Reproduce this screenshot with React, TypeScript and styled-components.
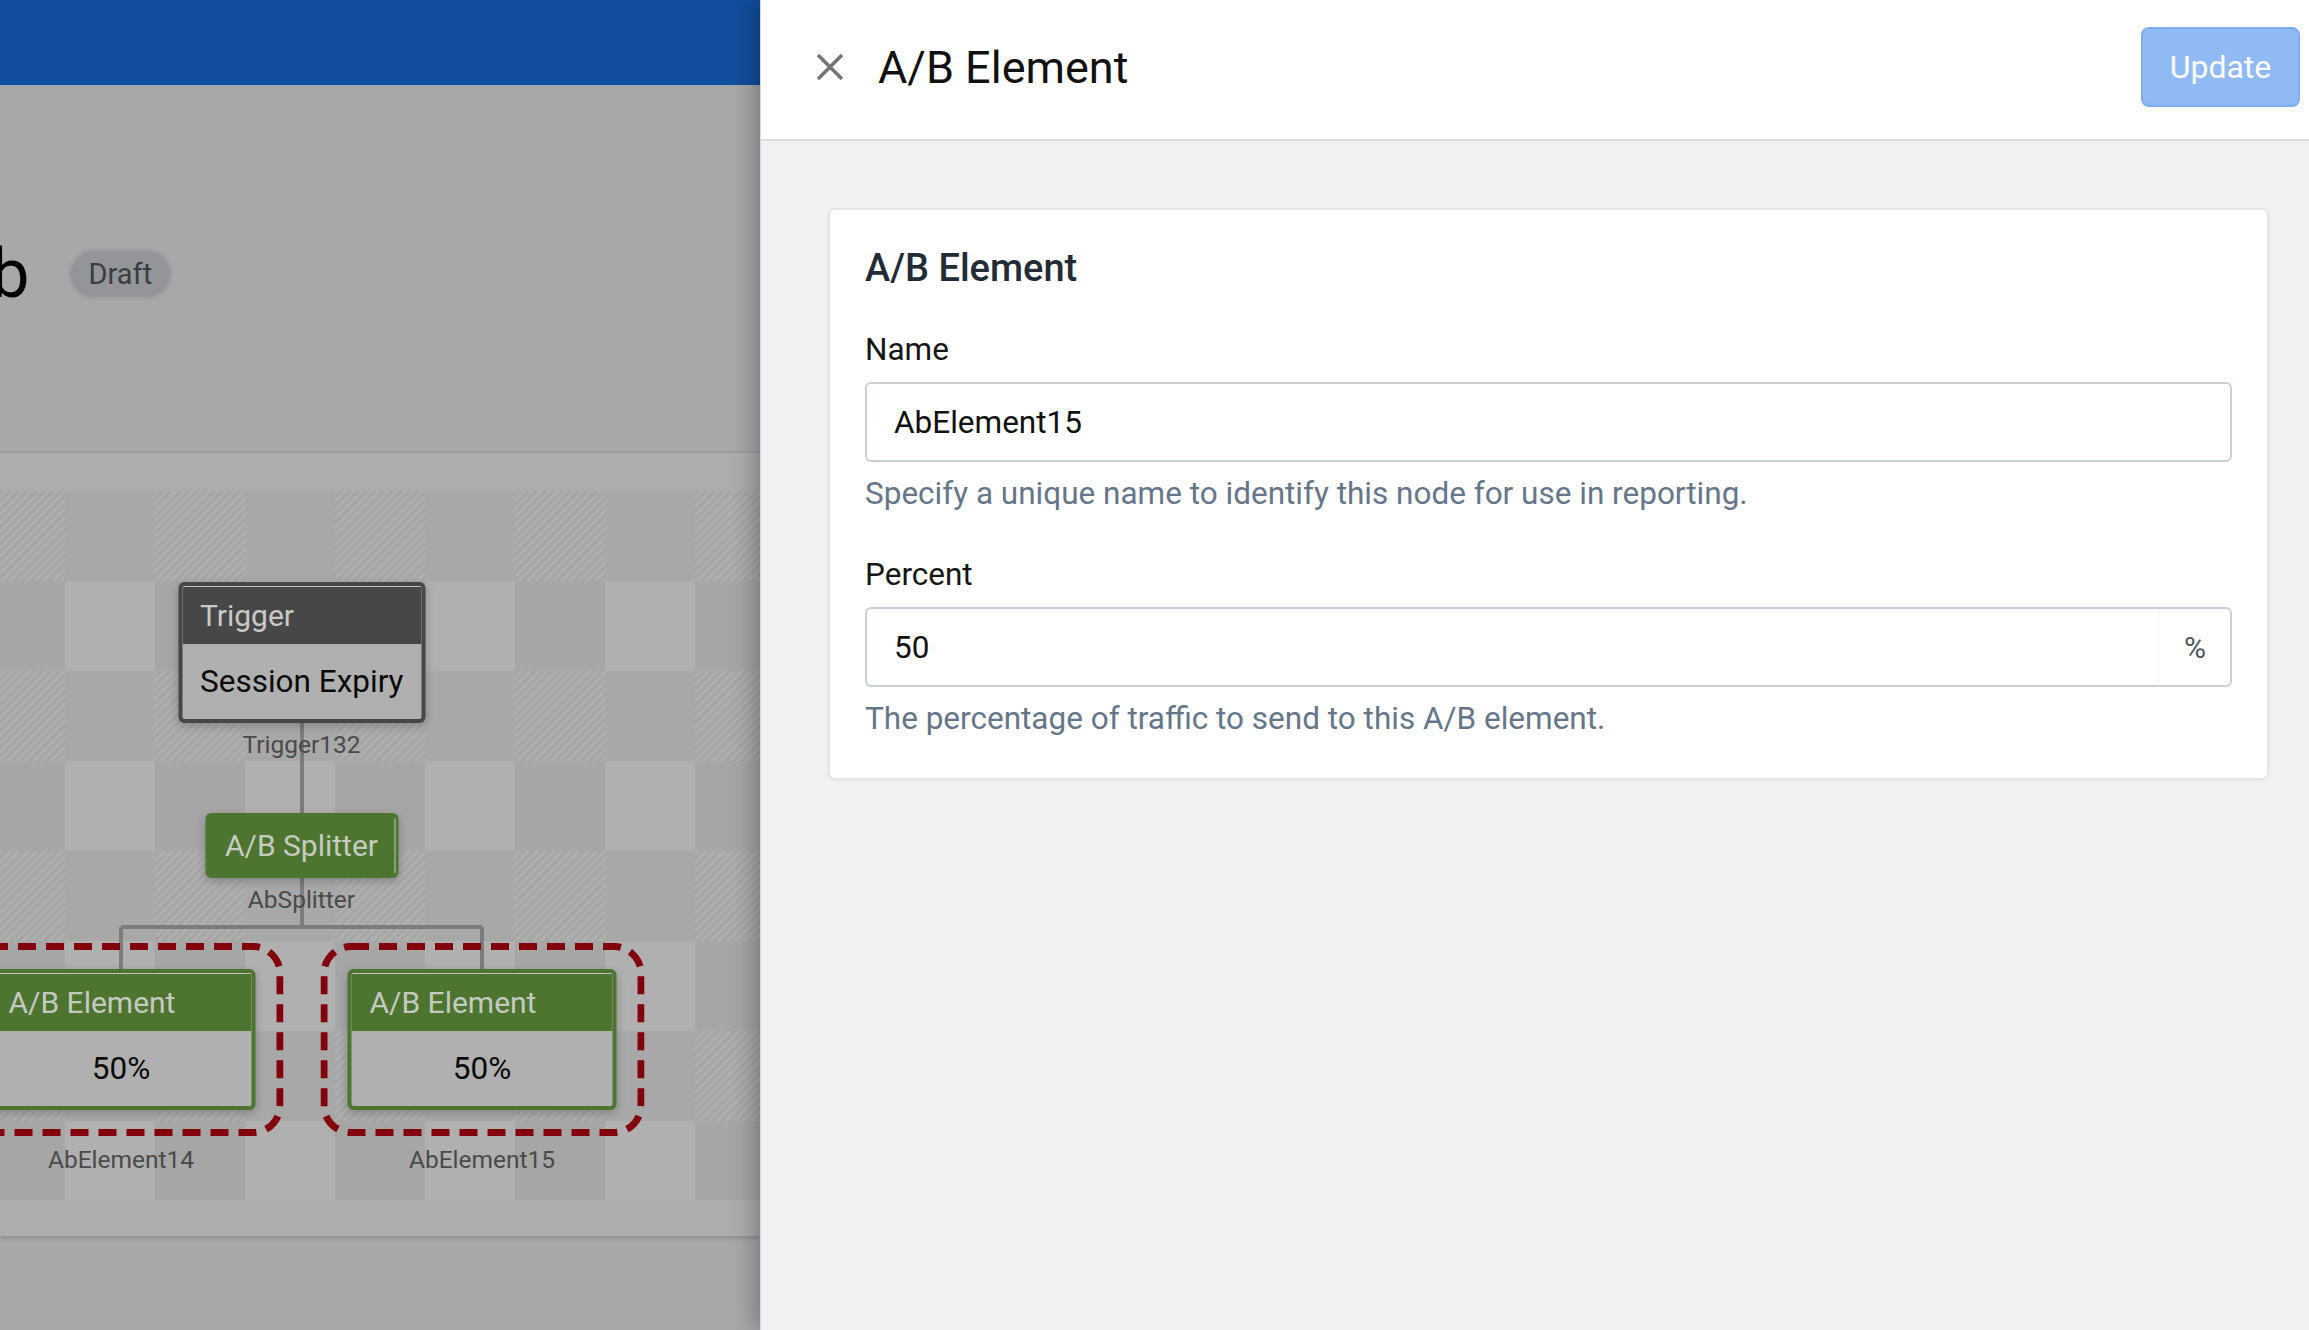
import styled, { createGlobalStyle } from "styled-components";

const GlobalStyle = createGlobalStyle`
  html, body {
    margin: 0;
    padding: 0;
  }
  body {
    font-family: Roboto, "Noto Sans", Arial, sans-serif;
    overflow: hidden;
  }
  * {
    box-sizing: border-box;
  }
`;

const elements = [
  { id: "AbElement14", cx: 121, percent: "50%" },
  { id: "AbElement15", cx: 482, percent: "50%" },
];

export default function App() {
  return (
    <>
      <GlobalStyle />
      <Screen>
        <Backdrop>
          <TopBar />
          <PageHead>
            <TitleRow>
              <PageTitle>Ab</PageTitle>
              <Badge>Draft</Badge>
            </TitleRow>
          </PageHead>
          <CanvasFrame>
            <Canvas>
              <Edges width="760" height="709">
                <path d="M302 232 V322 M302 387 V436 M121 436 H482 M121 436 V478 M482 436 V478" />
              </Edges>

              <NodeGroup $x={301.5} $y={91}>
                <Node $color="#474747" $w={247}>
                  <NodeHead $color="#474747" $text="#c9c9c9">Trigger</NodeHead>
                  <NodeBody $align="left">Session Expiry</NodeBody>
                </Node>
                <NodeLabel>Trigger132</NodeLabel>
              </NodeGroup>

              <NodeGroup $x={301.5} $y={322}>
                <Splitter>A/B Splitter</Splitter>
                <NodeLabel>AbSplitter</NodeLabel>
              </NodeGroup>

              {elements.map((el) => (
                <NodeGroup key={el.id} $x={el.cx} $y={452}>
                  <Selection>
                    <Dashes width="324" height="193">
                      <rect x="3.5" y="3.5" width="317" height="186" rx="27" />
                    </Dashes>
                    <Node $color="#4d7530" $w={269}>
                      <NodeHead $color="#4d7530" $text="#c5cac1">A/B Element</NodeHead>
                      <NodeBody $align="center">{el.percent}</NodeBody>
                    </Node>
                  </Selection>
                  <NodeLabel $gap={8}>{el.id}</NodeLabel>
                </NodeGroup>
              ))}
            </Canvas>
          </CanvasFrame>
        </Backdrop>

        <Drawer>
          <DrawerHeader>
            <CloseButton aria-label="Close">
              <svg width="28" height="28" viewBox="0 0 28 28">
                <path d="M2 2 L26 26 M26 2 L2 26" stroke="#757575" strokeWidth="3.6" />
              </svg>
            </CloseButton>
            <DrawerTitle>A/B Element</DrawerTitle>
            <UpdateButton>Update</UpdateButton>
          </DrawerHeader>

          <DrawerBody>
            <Card>
              <CardTitle>A/B Element</CardTitle>

              <Field>
                <Label>Name</Label>
                <InputBox>
                  <InputText>AbElement15</InputText>
                </InputBox>
                <Help>Specify a unique name to identify this node for use in reporting.</Help>
              </Field>

              <Field>
                <Label>Percent</Label>
                <InputBox>
                  <InputText>50</InputText>
                  <Addon>%</Addon>
                </InputBox>
                <Help>The percentage of traffic to send to this A/B element.</Help>
              </Field>
            </Card>
          </DrawerBody>
        </Drawer>
      </Screen>
    </>
  );
}

const Screen = styled.div`
  display: flex;
  width: 2309px;
  height: 1330px;
  overflow: hidden;
`;

const Backdrop = styled.div`
  width: 760px;
  flex: none;
  background-color: #a7a8aa;
  overflow: hidden;
`;

const TopBar = styled.div`
  height: 85px;
  background-color: #114e9d;
`;

const PageHead = styled.div`
  height: 366px;
  padding-top: 155px;
`;

const TitleRow = styled.div`
  display: flex;
  align-items: center;
  gap: 38px;
  height: 68px;
`;

const PageTitle = styled.h1`
  margin: 0 0 0 -53px;
  font-size: 68px;
  line-height: 1;
  font-weight: 400;
  color: #050505;
  white-space: nowrap;
`;

const Badge = styled.span`
  display: inline-flex;
  align-items: center;
  height: 52px;
  padding: 0 18px;
  border-radius: 26px;
  border: 3px solid #a0a1a3;
  background-color: #939598;
  color: #3a3d42;
  font-size: 29px;
`;

const CanvasFrame = styled.div`
  border-top: 2px solid #9d9ea0;
  background-color: #adadad;
  padding: 38px 0 36px;
  box-shadow: 0 3px 4px rgba(0, 0, 0, 0.12);
`;

const Canvas = styled.div`
  position: relative;
  height: 709px;
  background:
    conic-gradient(from 0deg at 50% 50%, #a8a8a8 0 25%, #b0b0b0 0 50%, #a6a6a6 0 75%, transparent 0),
    repeating-linear-gradient(135deg, #a6a6a6 0 3px, #aeaeae 3px 6px);
  background-size: 180px 180px, auto;
  background-position: -25px 0, 0 0;
`;

const Edges = styled.svg`
  position: absolute;
  left: 0;
  top: 0;

  path {
    fill: none;
    stroke: #7c7c7c;
    stroke-width: 4;
  }
`;

const NodeGroup = styled.div<{ $x: number; $y: number }>`
  position: absolute;
  left: ${(p) => p.$x}px;
  top: ${(p) => p.$y}px;
  transform: translateX(-50%);
  display: flex;
  flex-direction: column;
  align-items: center;
`;

const Node = styled.div<{ $color: string; $w: number }>`
  width: ${(p) => p.$w}px;
  border: 4px solid ${(p) => p.$color};
  border-radius: 6px;
  background-color: #b0b0b0;
  box-shadow: 0 3px 8px rgba(0, 0, 0, 0.22);
  overflow: hidden;
`;

const NodeHead = styled.div<{ $color: string; $text: string }>`
  height: 58px;
  display: flex;
  align-items: center;
  padding: 0 18px;
  background-color: ${(p) => p.$color};
  box-shadow: inset 0 1px 0 #c2c2c2;
  color: ${(p) => p.$text};
  font-size: 30px;
  white-space: nowrap;
`;

const NodeBody = styled.div<{ $align: "left" | "center" }>`
  height: 75px;
  display: flex;
  align-items: center;
  justify-content: ${(p) => (p.$align === "center" ? "center" : "flex-start")};
  padding: ${(p) => (p.$align === "center" ? "0" : "0 6px 0 18px")};
  color: #0a0a0a;
  font-size: 31.5px;
  white-space: nowrap;
`;

const NodeLabel = styled.div<{ $gap?: number }>`
  margin-top: ${(p) => p.$gap ?? 7}px;
  line-height: 30px;
  font-size: 24.5px;
  color: #4a4a4a;
  white-space: nowrap;
`;

const Splitter = styled.div`
  position: relative;
  width: 193px;
  height: 65px;
  display: flex;
  align-items: center;
  justify-content: center;
  border-radius: 6px;
  background-color: #4d7530;
  color: #c6cbc1;
  font-size: 30px;
  white-space: nowrap;
  box-shadow: 0 3px 8px rgba(0, 0, 0, 0.22);

  &::after {
    content: "";
    position: absolute;
    right: 3px;
    top: 5px;
    bottom: 5px;
    width: 1px;
    background-color: #bfc8b6;
  }
`;

const Selection = styled.div`
  position: relative;
  padding: 26px 27px 27px;
`;

const Dashes = styled.svg`
  position: absolute;
  left: 0;
  top: 0;

  rect {
    fill: none;
    stroke: #82000b;
    stroke-width: 7;
    stroke-dasharray: 18 10;
  }
`;

const Drawer = styled.div`
  position: relative;
  z-index: 1;
  flex: 1;
  display: flex;
  flex-direction: column;
  background-color: #f0f1f3;
  border-left: 1px solid #d5dbe3;
  box-shadow: -6px 0 22px rgba(0, 0, 0, 0.28);
`;

const DrawerHeader = styled.div`
  height: 141px;
  flex: none;
  display: flex;
  align-items: center;
  padding: 0 9px 5px 55px;
  background-color: #ffffff;
  border-bottom: 2px solid #dcdde0;
`;

const CloseButton = styled.button`
  display: flex;
  padding: 0;
  border: 0;
  background: none;
  cursor: pointer;
`;

const DrawerTitle = styled.h2`
  margin: 0 0 0 34px;
  font-size: 45px;
  font-weight: 400;
  color: #111111;
`;

const UpdateButton = styled.button`
  margin-left: auto;
  width: 159px;
  height: 80px;
  border: 2px solid #7eadf0;
  border-radius: 8px;
  background-color: #8fbaf3;
  color: #ffffff;
  font-family: Roboto, sans-serif;
  font-size: 32px;
  cursor: pointer;
`;

const DrawerBody = styled.div`
  flex: 1;
  padding: 67px 40px 0 67px;
`;

const Card = styled.div`
  background-color: #ffffff;
  border: 2px solid #e3e5e8;
  border-radius: 7px;
  padding: 35px 35px 37px;
  box-shadow: 0 1px 3px rgba(0, 0, 0, 0.05);
`;

const CardTitle = styled.h3`
  margin: 0;
  font-size: 38px;
  line-height: 46px;
  font-weight: 500;
  color: #222b36;
`;

const Field = styled.div`
  margin-top: 35px;
`;

const Label = styled.div`
  font-size: 31.5px;
  line-height: 48px;
  color: #161616;
  margin-bottom: 8px;
`;

const InputBox = styled.div`
  display: flex;
  height: 80px;
  border: 2px solid #c9d0d8;
  border-radius: 6px;
  background-color: #ffffff;
`;

const InputText = styled.div`
  flex: 1;
  display: flex;
  align-items: center;
  padding-left: 27px;
  font-size: 31.5px;
  color: #111111;
`;

const Addon = styled.div`
  width: 71px;
  display: flex;
  align-items: center;
  justify-content: center;
  border-left: 1px solid #f6f7f8;
  font-size: 30px;
  color: #4b5563;
`;

const Help = styled.div`
  margin-top: 9px;
  font-size: 31.5px;
  line-height: 45px;
  color: #667689;
`;
